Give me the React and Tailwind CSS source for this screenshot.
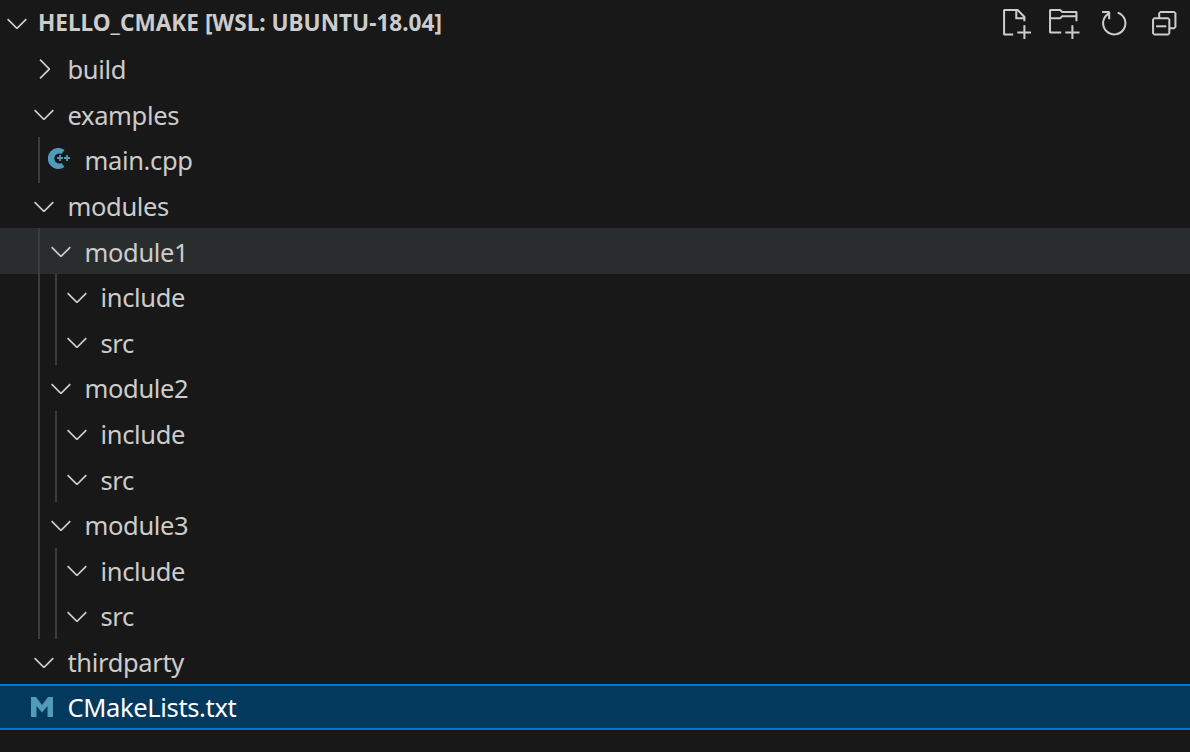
import React from 'react';
import { VscChevronDown, VscChevronRight, VscNewFile, VscNewFolder, VscRefresh, VscCollapseAll } from 'react-icons/vsc';

const CppIcon = () => (
  <svg width="26" height="24" viewBox="0 0 26 24" className="text-[#519aba]" fill="none">
    <path d="M16.5 2A10.5 10.5 0 1 0 16.5 19L13.5 15A5 5 0 1 1 13.5 6Z" fill="currentColor" />
    <path d="M9 10h6M12 7v6M16 10h6M19 7v6" stroke="currentColor" strokeWidth="1.8" />
  </svg>
);

const MakeIcon = () => (
  <svg width="24" height="20" viewBox="0 0 24 20" className="text-[#519aba] -ml-[4px]">
    <path d="M1 0H6L12 8L18 0H23V20H17.5V9L12 15.5L6.5 9V20H1Z" fill="currentColor" />
  </svg>
);

const Row = ({ depth, name, open, icon, hovered, selected }) => {
  const paddings = ['pl-[28px]', 'pl-[45px]', 'pl-[61px]'];
  let rowClass = 'text-[#cccccc]';
  if (hovered) rowClass = 'bg-[#2a2d2e] text-[#cccccc]';
  if (selected) rowClass = 'bg-[#04395e] text-white border-y-2 border-[#0078d4]';

  return (
    <div className={`flex items-center h-[45.6px] ${paddings[depth]} ${rowClass}`}>
      <span className="w-[32px] h-[32px] mr-[7.5px] flex items-center justify-center shrink-0">
        {icon ? icon : open ? <VscChevronDown className="w-[32px] h-[32px]" /> : <VscChevronRight className="w-[32px] h-[32px]" />}
      </span>
      <span className="pt-[1px] tracking-[-0.35px]">{name}</span>
    </div>
  );
};

const Group = ({ guideClass, children }) => (
  <div className="relative">
    <div className={`absolute top-0 bottom-0 w-[2px] bg-[#3c3c3c] z-10 ${guideClass}`}></div>
    {children}
  </div>
);

const modules = [
  { name: 'module1', hovered: true },
  { name: 'module2' },
  { name: 'module3' },
];

const App = () => (
  <div className="w-[1190px] h-[752px] bg-[#181818] overflow-hidden text-[25.5px] font-['Noto_Sans','Open_Sans',sans-serif]">
    <div className="flex items-center h-[46px] pl-[1px] pr-[10px] text-[#cccccc]">
      <VscChevronDown className="w-[32px] h-[32px] shrink-0" />
      <span className="ml-[5px] text-[22.6px] font-bold">HELLO_CMAKE [WSL: UBUNTU-18.04]</span>
      <div className="ml-auto flex items-center">
        <VscNewFile className="w-[32.5px] h-[32.5px] mr-[16px]" />
        <VscNewFolder className="w-[32.5px] h-[32.5px] mr-[18px]" />
        <VscRefresh className="w-[32.5px] h-[32.5px] mr-[17.5px]" />
        <VscCollapseAll className="w-[32.5px] h-[32.5px]" />
      </div>
    </div>
    <Row depth={0} name="build" />
    <Row depth={0} name="examples" open />
    <Group guideClass="left-[38px]">
      <Row depth={1} name="main.cpp" icon={<CppIcon />} />
    </Group>
    <Row depth={0} name="modules" open />
    <Group guideClass="left-[38px]">
      {modules.map((mod) => (
        <div key={mod.name}>
          <Row depth={1} name={mod.name} open hovered={mod.hovered} />
          <Group guideClass="left-[55px]">
            <Row depth={2} name="include" open />
            <Row depth={2} name="src" open />
          </Group>
        </div>
      ))}
    </Group>
    <Row depth={0} name="thirdparty" open />
    <Row depth={0} name="CMakeLists.txt" icon={<MakeIcon />} selected />
  </div>
);

export default App;
